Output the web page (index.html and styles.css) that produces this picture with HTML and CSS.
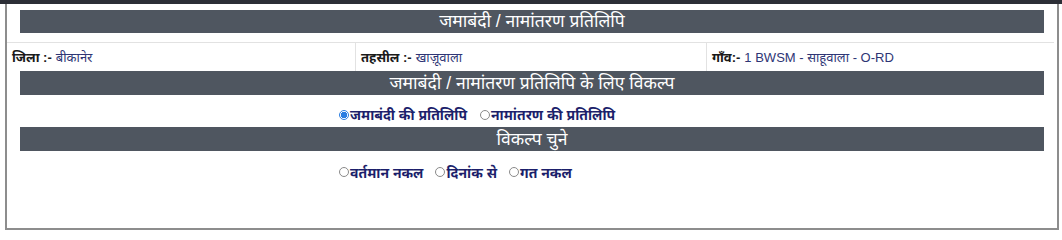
FILE: index.html
```html
<!DOCTYPE html>
<html lang="hi">
<head>
<meta charset="utf-8">
<link rel="stylesheet" href="styles.css">
</head>
<body>
<div class="topbar"></div>
<div class="panel">
  <div class="head head-first">जमाबंदी / नामांतरण प्रतिलिपि</div>
  <div class="info">
    <div class="cell"><b>जिला :-</b> <span class="val">बीकानेर</span></div>
    <div class="cell"><b>तहसील :-</b> <span class="val">खाज़ूवाला</span></div>
    <div class="cell"><b>गाँव:-</b> <span class="val">1 BWSM - साहूवाला - O-RD</span></div>
  </div>
  <div class="head">जमाबंदी / नामांतरण प्रतिलिपि के लिए विकल्प</div>
  <div class="opts opts-first">
    <label class="opt"><span class="radio checked"></span>जमाबंदी की प्रतिलिपि</label>
    <label class="opt"><span class="radio"></span>नामांतरण की प्रतिलिपि</label>
  </div>
  <div class="head">विकल्प चुने</div>
  <div class="opts opts-last">
    <label class="opt"><span class="radio"></span>वर्तमान नकल</label>
    <label class="opt"><span class="radio"></span>दिनांक से</label>
    <label class="opt"><span class="radio"></span>गत नकल</label>
  </div>
</div>
</body>
</html>
```
FILE: styles.css
```css
html, body {
  margin: 0;
  padding: 0;
  background: #ffffff;
}
body {
  font-family: "Liberation Sans", "Noto Sans", Arial, sans-serif;
  font-size: 12px;
  color: #222;
}
.topbar {
  height: 4px;
  background: #2c2e36;
}
.panel {
  margin-left: 5px;
  width: 1050px;
  height: 224px;
  border-left: 2px solid #8d8d8d;
  border-right: 2px solid #8d8d8d;
  border-bottom: 2px solid #8d8d8d;
  display: flex;
  flex-direction: column;
}
.head {
  margin: 0 13px;
  height: 24px;
  background: #4f5660;
  color: #ffffff;
  font-size: 17.5px;
  line-height: 24px;
  text-align: center;
}
.head-first {
  margin-top: 6px;
  height: 23px;
  line-height: 23px;
}
.info {
  margin-top: 9px;
  margin-right: 3px;
  display: grid;
  grid-template-columns: 349px 351px 1fr;
  border-top: 1px solid #e2e2e2;
  height: 28px;
}
.cell {
  display: flex;
  align-items: center;
  gap: 4px;
  padding-left: 5px;
  border-right: 1px solid #e2e2e2;
  font-size: 13px;
  color: #1a1a1a;
}
.cell:last-child {
  border-right: none;
}
.cell b {
  font-weight: 700;
}
.val {
  color: #2e3575;
}
.opts {
  display: flex;
  gap: 13px;
  padding-left: 332px;
  height: 32px;
  align-items: flex-end;
  box-sizing: border-box;
}
.opts-first {
  padding-bottom: 3px;
}
.opts-last {
  height: 30px;
  align-items: center;
  margin-top: 6px;
  gap: 12px;
}
.opt {
  display: flex;
  align-items: center;
  font-weight: 700;
  font-size: 14px;
  color: #1c1f6b;
}
.radio {
  width: 8px;
  height: 8px;
  border: 1px solid #8a8a8a;
  border-radius: 50%;
  margin-right: 1px;
  background: #fff;
}
.radio.checked {
  border-color: #2a7de1;
  background: radial-gradient(circle, #2a7de1 0 3px, #ffffff 3.5px);
}
```
